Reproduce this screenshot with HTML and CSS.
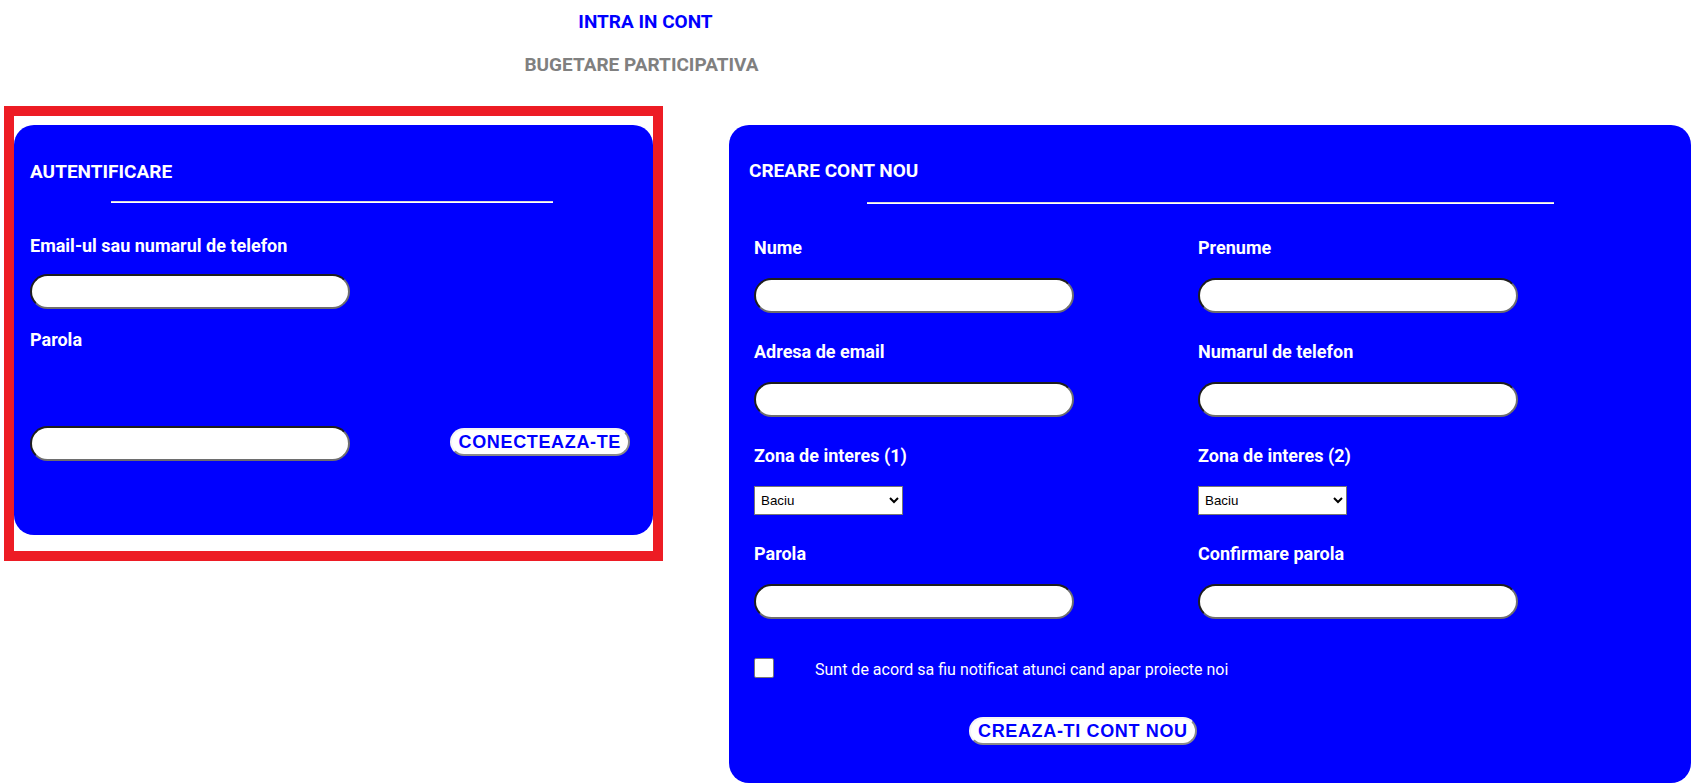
FILE: index.html
```html
<!DOCTYPE html>
<html lang="ro">
<head>
<meta charset="utf-8">
<title>Intra in cont - Bugetare participativa</title>
<link rel="stylesheet" href="styles.css">
</head>
<body>
<header class="nav">
  <a class="nav-item nav-login" href="#">INTRA IN CONT</a>
  <a class="nav-item nav-brand" href="#">BUGETARE PARTICIPATIVA</a>
</header>
<main class="page">
  <section class="login-frame">
    <form class="card card-login">
      <h2 class="card-title">AUTENTIFICARE</h2>
      <hr class="card-rule rule-login">
      <label class="field-label lbl-email">Email-ul sau numarul de telefon</label>
      <input class="text-input input-email" type="text">
      <label class="field-label lbl-pass">Parola</label>
      <div class="login-row">
        <input class="text-input" type="password">
        <button class="pill-btn btn-login" type="button">CONECTEAZA-TE</button>
      </div>
    </form>
  </section>
  <form class="card card-register">
    <h2 class="card-title">CREARE CONT NOU</h2>
    <hr class="card-rule rule-register">
    <div class="reg-grid">
      <div class="field">
        <label class="field-label">Nume</label>
        <input class="text-input" type="text">
      </div>
      <div class="field">
        <label class="field-label">Prenume</label>
        <input class="text-input" type="text">
      </div>
      <div class="field">
        <label class="field-label">Adresa de email</label>
        <input class="text-input" type="email">
      </div>
      <div class="field">
        <label class="field-label">Numarul de telefon</label>
        <input class="text-input" type="tel">
      </div>
      <div class="field">
        <label class="field-label">Zona de interes (1)</label>
        <select class="zone-select"><option>Baciu</option></select>
      </div>
      <div class="field">
        <label class="field-label">Zona de interes (2)</label>
        <select class="zone-select"><option>Baciu</option></select>
      </div>
      <div class="field">
        <label class="field-label">Parola</label>
        <input class="text-input" type="password">
      </div>
      <div class="field">
        <label class="field-label">Confirmare parola</label>
        <input class="text-input" type="password">
      </div>
    </div>
    <div class="notify-row">
      <input class="notify-check" type="checkbox">
      <span class="notify-text">Sunt de acord sa fiu notificat atunci cand apar proiecte noi</span>
    </div>
    <button class="pill-btn btn-register" type="button">CREAZA-TI CONT NOU</button>
  </form>
</main>
</body>
</html>
```
FILE: styles.css
```css
html, body {
  margin: 0;
  padding: 0;
  background: #ffffff;
}

body {
  font-family: Roboto, "Liberation Sans", Arial, sans-serif;
  overflow: hidden;
}

/* ---------- header ---------- */
.nav {
  box-sizing: border-box;
  width: 1283px;
  height: 106px;
  padding-top: 11px;
  display: flex;
  flex-direction: column;
  align-items: center;
  gap: 20.5px;
}

.nav-item {
  display: block;
  font-size: 19px;
  line-height: 22px;
  font-weight: 700;
  text-decoration: none;
}

.nav-login {
  color: #0000ff;
  padding-left: 8px;
}

.nav-brand {
  color: #808080;
}

/* ---------- page ---------- */
.page {
  display: flex;
  align-items: flex-start;
  padding-left: 4px;
}

.login-frame {
  width: 639px;
  border: 10px solid #ed1c24;
  padding: 9px 0 16px;
}

.card {
  box-sizing: border-box;
  background: #0000ff;
  border-radius: 20px;
  margin: 0;
}

.card-title {
  margin: 0;
  color: #ffffff;
  font-size: 19px;
  line-height: 22px;
  font-weight: 700;
}

.card-rule {
  height: 0;
  margin: 0;
  border: 0;
  border-top: 1px solid #d9d9d9;
  border-bottom: 1px solid #ffffff;
}

.field-label {
  display: block;
  color: #ffffff;
  font-size: 18px;
  line-height: 22px;
  font-weight: 700;
}

.text-input {
  box-sizing: border-box;
  display: block;
  width: 320px;
  height: 35px;
  margin: 0;
  padding: 0 14px;
  background: #ffffff;
  border: 2px solid;
  border-color: #1e1e1e #6e6e6e #6e6e6e #1e1e1e;
  border-radius: 18px;
  font-family: "Liberation Sans", Arial, sans-serif;
  font-size: 14px;
  outline: none;
}

.pill-btn {
  box-sizing: border-box;
  display: block;
  height: 28px;
  margin: 0;
  padding: 0 7px;
  background: #ffffff;
  color: #0000ff;
  border: 2px solid;
  border-color: #f4f4f4 #8a8a8a #8a8a8a #f4f4f4;
  border-radius: 15px;
  font-family: "Liberation Sans", Arial, sans-serif;
  font-size: 18px;
  line-height: 22px;
  font-weight: 700;
  letter-spacing: 0.65px;
  white-space: nowrap;
  cursor: pointer;
}

/* ---------- login card ---------- */
.card-login {
  height: 410px;
  padding: 36px 23px 0 16px;
}

.rule-login {
  width: 442px;
  margin: 18px 0 0 81px;
}

.lbl-email {
  margin-top: 32px;
}

.input-email {
  margin-top: 17px;
}

.lbl-pass {
  margin-top: 19.5px;
}

.login-row {
  margin-top: 75.5px;
  display: flex;
  justify-content: space-between;
  align-items: flex-start;
}

.btn-login {
  margin-top: 2px;
}

/* ---------- register card ---------- */
.card-register {
  width: 962px;
  height: 658px;
  margin-left: 66px;
  margin-top: 19px;
  padding: 35px 20px 0 20px;
}

.rule-register {
  width: 687px;
  margin: 20px 0 0 118px;
}

.reg-grid {
  margin: 33px 0 0 5px;
  display: grid;
  grid-template-columns: 444px 444px;
  row-gap: 28px;
}

.field .field-label {
  margin-bottom: 19px;
}

.zone-select {
  box-sizing: border-box;
  display: block;
  width: 149px;
  height: 29px;
  margin: 0;
  padding: 0 2px;
  background: #ffffff;
  color: #000000;
  border: 1px solid #767676;
  border-radius: 0;
  font-family: "Liberation Sans", Arial, sans-serif;
  font-size: 13.333px;
}

.notify-row {
  margin: 39px 0 0 5px;
  display: flex;
  align-items: flex-start;
}

.notify-check {
  appearance: none;
  -webkit-appearance: none;
  box-sizing: border-box;
  width: 20px;
  height: 20px;
  margin: 0;
  background: #ffffff;
  border: 1px solid #767676;
  border-radius: 2px;
}

.notify-text {
  margin-left: 41px;
  padding-top: 3px;
  color: #ffffff;
  font-size: 16px;
  line-height: 18px;
}

.btn-register {
  margin: 38px 0 0 220px;
}
```
